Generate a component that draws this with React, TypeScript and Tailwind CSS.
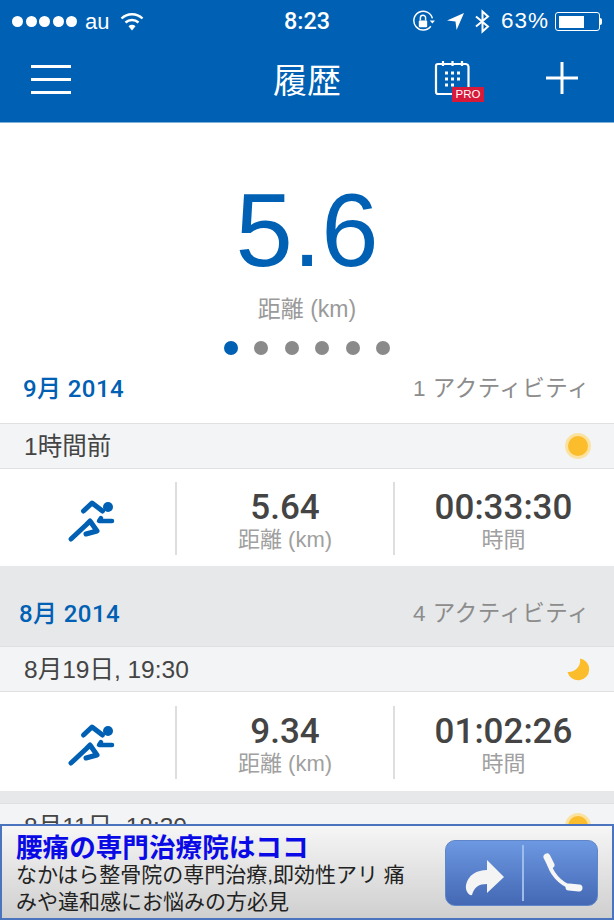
import React from "react";

const sans = "font-['Liberation_Sans','Noto_Sans_CJK_JP',sans-serif]";
const num = "font-['Roboto','Noto_Sans_CJK_JP',sans-serif]";

function Runner() {
  return (
    <svg width="50" height="46" viewBox="0 0 50 46" fill="none" stroke="#0060b3" strokeLinecap="round" strokeLinejoin="round">
      <circle cx="42" cy="8" r="5" fill="#0060b3" stroke="none" />
      <path d="M17.5 12 L26 4 L36.5 12" strokeWidth="5" />
      <path d="M35 19 L33 22 H46" strokeWidth="4.5" />
      <path d="M5 40 L20 26 L24 22 L31 32 L20 35" strokeWidth="5" />
    </svg>
  );
}

function Sun() {
  return <div className="h-[26px] w-[26px] rounded-full bg-[#fbbd2c] border-[3px] border-[#fbe2a0]" />;
}

function Moon() {
  return (
    <svg width="26" height="26" viewBox="0 0 26 26">
      <path d="M15 2.5 A11 11 0 1 1 2.5 16 A11.5 11.5 0 0 0 15 2.5 Z" fill="#fbbd2c" />
    </svg>
  );
}

function MonthRow({ month, count, cls }: { month: string; count: string; cls: string }) {
  return (
    <div className={`flex items-center justify-between pr-[24px] ${cls}`}>
      <span className={`text-[24px] font-medium tracking-[0.4px] text-[#0060b3] ${num}`}>{month}</span>
      <span className="text-[22.5px] text-[#8c8c8c] tracking-[0.5px]">{count}</span>
    </div>
  );
}

function DateRow({ label, icon }: { label: string; icon: React.ReactNode }) {
  return (
    <div className="flex h-[46px] items-center justify-between border-y border-[#dfe0e2] bg-[#f3f4f6] pl-[24px] pr-[23px]">
      <span className="pt-[2px] text-[24.5px] text-[#444]">{label}</span>
      {icon}
    </div>
  );
}

function Stat({ value, label, w }: { value: string; label: string; w: string }) {
  return (
    <div className={`flex h-[73px] flex-col items-center border-l-2 border-[#dedede] pt-[7px] ${w}`}>
      <span className={`text-[35px] font-medium leading-[38px] text-[#444] ${num}`}>{value}</span>
      <span className="text-[22px] leading-[26px] text-[#a0a0a0]">{label}</span>
    </div>
  );
}

function StatsRow({ d, t, cls }: { d: string; t: string; cls: string }) {
  return (
    <div className={`flex items-start bg-white ${cls}`}>
      <div className="flex w-[175px] justify-center pl-[6px] pt-[17px]">
        <Runner />
      </div>
      <Stat value={d} label="距離 (km)" w="w-[218px]" />
      <Stat value={t} label="時間" w="w-[221px] pr-[2px]" />
    </div>
  );
}

export default function App() {
  return (
    <div className={`relative h-[920px] w-[614px] overflow-hidden bg-white ${sans}`}>
      <header className="h-[123px] border-b border-[#7fb0d9] bg-[#0060b3] text-white">
        <div className="grid h-[43px] grid-cols-[1fr_auto_1fr] items-center pl-[12px] pr-[12px]">
          <div className="flex items-center">
            <div className="flex gap-[2.5px]">
              {[0, 1, 2, 3, 4].map((i) => (
                <span key={i} className="h-[11px] w-[11px] rounded-full bg-white" />
              ))}
            </div>
            <span className="ml-[8px] text-[22px] leading-none">au</span>
            <svg className="ml-[11px]" width="24" height="19" viewBox="0 0 24 19" fill="none" stroke="white" strokeWidth="2.4">
              <path d="M1.5 6.5 A15 15 0 0 1 22.5 6.5" />
              <path d="M5.5 10.5 A9.5 9.5 0 0 1 18.5 10.5" />
              <path d="M12 18.5 L8.5 14.2 A5 5 0 0 1 15.5 14.2 Z" fill="white" stroke="none" />
            </svg>
          </div>
          <span className={`text-[23.4px] font-medium leading-none ${num}`}>8:23</span>
          <div className="flex items-center justify-end">
            <svg width="23" height="23" viewBox="0 0 22 22" fill="none" stroke="white" strokeWidth="1.4">
              <path d="M18 15.5 A9 9 0 1 1 19.5 8" />
              <path d="M17 10 h5 l-2.5 3 z" fill="white" stroke="none" />
              <rect x="6.5" y="10" width="8" height="6.5" fill="white" stroke="none" rx="1" />
              <path d="M8 10 V7.5 a2.5 2.5 0 0 1 5 0 V10" />
            </svg>
            <svg className="ml-[12px]" width="17" height="17" viewBox="0 0 16 16">
              <path d="M16 0 L0 7 L8 8 L9 16 Z" fill="white" />
            </svg>
            <svg className="ml-[11px]" width="15" height="25" viewBox="0 0 15 24" fill="none" stroke="white" strokeWidth="2">
              <path d="M1 7 L13 17 L7.5 22 V2 L13 7 L1 17" />
            </svg>
            <span className="ml-[11px] text-[22.5px] leading-none tracking-[1px]">63%</span>
            <div className="ml-[6px] flex h-[19px] w-[45px] items-center rounded-[3px] border border-white p-[2.5px]">
              <div className="h-full w-[25px] bg-white" />
            </div>
            <div className="h-[7px] w-[2px] rounded-r-sm bg-white" />
          </div>
        </div>
        <div className="flex h-[79px] items-center pl-[31px] pr-[35px]">
          <div className="mb-[7px] flex w-[40px] flex-col gap-[10px]">
            <span className="h-[3px] bg-white" />
            <span className="h-[3px] bg-white" />
            <span className="h-[3px] bg-white" />
          </div>
          <span className="ml-[202px] mb-[3px] w-[68px] text-[34px] leading-[40px]">履歴</span>
          <div className="relative ml-[93px] mb-[7px] h-[36px] w-[37px]">
            <svg width="37" height="36" viewBox="0 0 37 36" fill="none" stroke="white" strokeWidth="2.2">
              <path d="M5 3 H32 a3 3 0 0 1 2.5 2.5 V33 H4 a2 2 0 0 1 -2 -2 V5 a2 2 0 0 1 2 -2 Z" />
              <path d="M9 0 v5 M18.5 0 v5 M28 0 v5" />
              <path d="M11 12 h3 M17 12 h3 M23 12 h3 M11 18 h3 M17 18 h3 M23 18 h3 M11 24 h3 M17 24 h3" strokeWidth="3" />
            </svg>
            <span className="absolute left-[18px] top-[26px] flex h-[15px] w-[32px] items-center justify-center bg-[#d7193a] text-[11.5px] leading-none">PRO</span>
          </div>
          <svg className="ml-auto mb-[9px]" width="34" height="34" viewBox="0 0 34 34" stroke="white" strokeWidth="3">
            <path d="M17 1 V33 M1 17 H33" />
          </svg>
        </div>
      </header>

      <section className="flex h-[245px] flex-col items-center">
        <div className="mt-[53px] text-[103px] leading-[110px] text-[#0060b3]">5.6</div>
        <div className="mt-[10px] text-[23px] leading-[26px] text-[#9a9a9a]">距離 (km)</div>
        <div className="mt-[19px] flex gap-[16.5px]">
          <span className="h-[14px] w-[14px] rounded-full bg-[#0060b3]" />
          {[0, 1, 2, 3, 4].map((i) => (
            <span key={i} className="h-[14px] w-[14px] rounded-full bg-[#8a8a8a]" />
          ))}
        </div>
      </section>

      <MonthRow month="9月 2014" count="1 アクティビティ" cls="bg-white pl-[23px] h-[55px] pb-[14px]" />
      <DateRow label="1時間前" icon={<Sun />} />
      <StatsRow d="5.64" t="00:33:30" cls="h-[97px] pt-[13px]" />
      <MonthRow month="8月 2014" count="4 アクティビティ" cls="bg-[#e6e8ea] pl-[19px] h-[80px] pt-[15px]" />
      <DateRow label="8月19日, 19:30" icon={<Moon />} />
      <StatsRow d="9.34" t="01:02:26" cls="h-[99px] pt-[14px]" />
      <div className="h-[12px] bg-[#e6e8ea]" />
      <DateRow label="8月11日, 18:30" icon={<Sun />} />

      <aside className="absolute bottom-0 left-0 flex h-[96px] w-[614px] items-start justify-between border-2 border-[#4a74bd] bg-gradient-to-b from-[#f6f6f6] to-[#cfcfcf] pl-[14px] pr-[14px] pt-[9px]">
        <div className="w-[410px]">
          <div className="text-[26.6px] font-bold leading-[26px] text-[#0a0ae6]">腰痛の専門治療院はココ</div>
          <div className="text-[21px] leading-[27px] text-[#222]">なかはら整骨院の専門治療,即効性アリ 痛<br />みや違和感にお悩みの方必見</div>
        </div>
        <div className="mt-[5px] flex h-[66px] w-[153px] items-center rounded-[10px] border border-[#5f86c8] bg-gradient-to-b from-[#6d98e2] to-[#4468b4]">
          <div className="flex w-[76px] justify-center pl-[1px] pt-[10px]">
            <svg width="40" height="40" viewBox="0 0 40 40">
              <path d="M22 2 L39 19 L22 35 V26 C14 26 9 29 7 37 C4 38 0 33 1 27 C3 17 12 12 22 12 Z" fill="#f4f4f4" />
            </svg>
          </div>
          <div className="h-[56px] w-[2px] bg-[#9dbcec]" />
          <div className="flex flex-1 justify-center pl-[4px] pt-[2px]">
            <svg width="42" height="42" viewBox="0 0 42 42" fill="none" stroke="#f6f6f6" strokeLinecap="round">
              <path d="M6 6 C8 20 18 31 31 35" strokeWidth="4" />
              <path d="M5 4 L9 12" strokeWidth="7" />
              <path d="M27 34 L37 35" strokeWidth="7" />
            </svg>
          </div>
        </div>
      </aside>
    </div>
  );
}
